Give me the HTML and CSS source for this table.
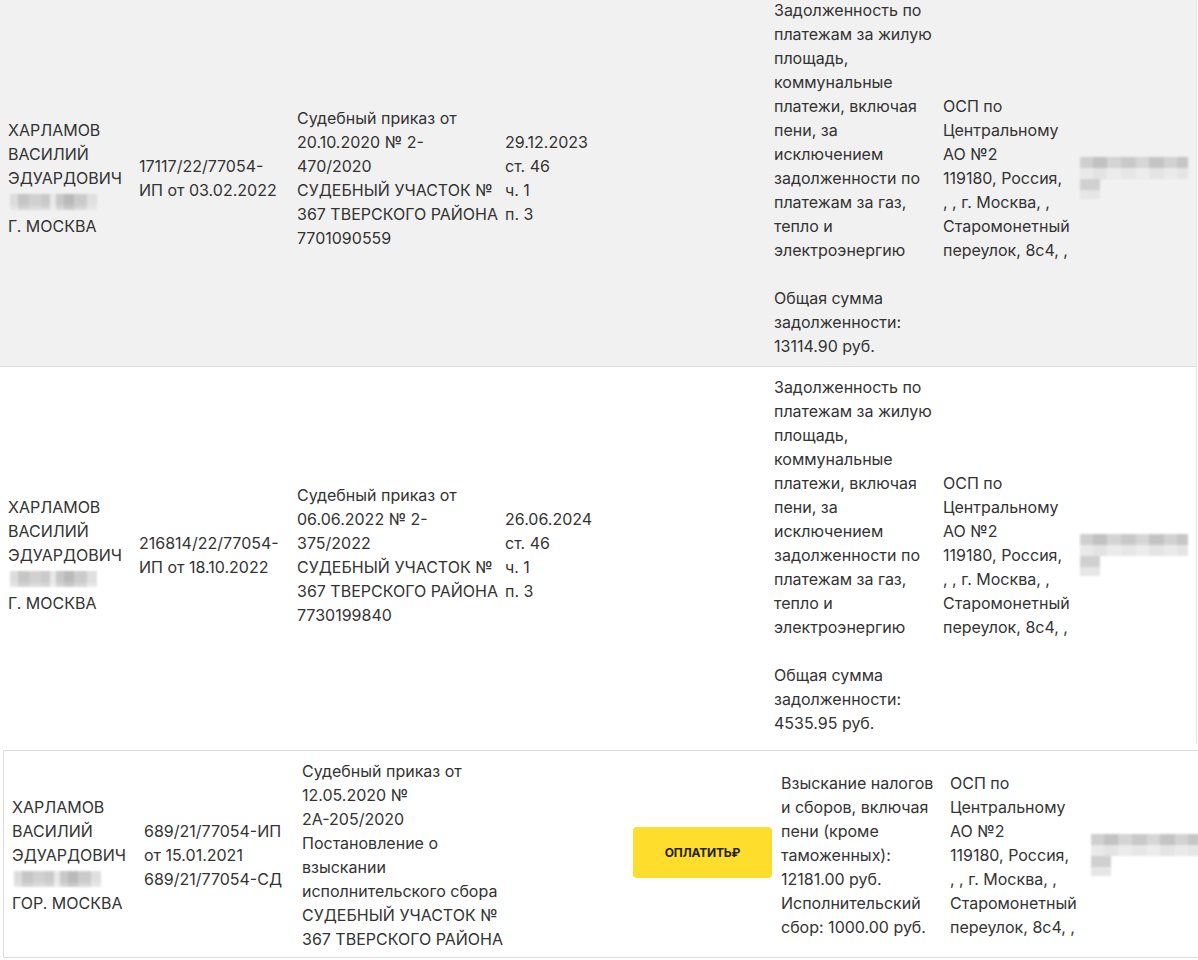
FILE: index.html
```html
<!DOCTYPE html>
<html lang="ru">
<head>
    <meta charset="UTF-8">
    <meta name="viewport" content="width=device-width, initial-scale=1.0">
    <title>Исполнительные производства</title>
    <link rel="stylesheet" href="styles.css">
</head>
<body>
    <div class="results">
        <table class="ip-table ip-table--main">
            <colgroup>
                <col class="c-name"><col class="c-num"><col class="c-doc"><col class="c-end">
                <col class="c-pay"><col class="c-subj"><col class="c-dept"><col class="c-agent">
            </colgroup>
            <tr class="row-alt">
                <td>ХАРЛАМОВ ВАСИЛИЙ ЭДУАРДОВИЧ<span class="blur blur-dob"></span>Г. МОСКВА</td>
                <td>17117/22/77054-<wbr>ИП от 03.02.2022</td>
                <td>Судебный приказ от 20.10.2020 № 2-<wbr>470/2020<br>СУДЕБНЫЙ УЧАСТОК № <span class="nowrap">367 ТВЕРСКОГО РАЙОНА</span> 7701090559</td>
                <td>29.12.2023<br>ст. 46<br>ч. 1<br>п. 3</td>
                <td></td>
                <td>Задолженность по платежам за жилую площадь, коммунальные платежи, включая пени, за исключением задолженности по платежам за газ, тепло и электроэнергию<br><br>Общая сумма задолженности: 13114.90 руб.</td>
                <td>ОСП по Центральному АО №2<br>119180, Россия, , , г. Москва, , Старомонетный переулок, 8с4, ,</td>
                <td><span class="blur blur-agent"><span class="blur-line"></span><span class="blur-tail"></span></span></td>
            </tr>
            <tr>
                <td>ХАРЛАМОВ ВАСИЛИЙ ЭДУАРДОВИЧ<span class="blur blur-dob"></span>Г. МОСКВА</td>
                <td>216814/22/77054-<wbr>ИП от 18.10.2022</td>
                <td>Судебный приказ от 06.06.2022 № 2-<wbr>375/2022<br>СУДЕБНЫЙ УЧАСТОК № <span class="nowrap">367 ТВЕРСКОГО РАЙОНА</span> 7730199840</td>
                <td>26.06.2024<br>ст. 46<br>ч. 1<br>п. 3</td>
                <td></td>
                <td>Задолженность по платежам за жилую площадь, коммунальные платежи, включая пени, за исключением задолженности по платежам за газ, тепло и электроэнергию<br><br>Общая сумма задолженности: 4535.95 руб.</td>
                <td>ОСП по Центральному АО №2<br>119180, Россия, , , г. Москва, , Старомонетный переулок, 8с4, ,</td>
                <td><span class="blur blur-agent"><span class="blur-line"></span><span class="blur-tail"></span></span></td>
            </tr>
        </table>

        <table class="ip-table ip-table--single">
            <colgroup>
                <col class="s-name"><col class="s-num"><col class="s-doc"><col class="s-end">
                <col class="s-pay"><col class="s-subj"><col class="s-dept"><col class="s-agent">
            </colgroup>
            <tr>
                <td>ХАРЛАМОВ ВАСИЛИЙ ЭДУАРДОВИЧ<span class="blur blur-dob"></span>ГОР. МОСКВА</td>
                <td>689/21/77054-ИП от 15.01.2021<br>689/21/77054-СД</td>
                <td>Судебный приказ от 12.05.2020 № <span class="nowrap">2А-205/2020</span><br>Постановление о взыскании исполнительского сбора<br>СУДЕБНЫЙ УЧАСТОК № 367 ТВЕРСКОГО РАЙОНА</td>
                <td></td>
                <td class="cell-pay"><button class="pay-btn" type="button">Оплатить₽</button></td>
                <td>Взыскание налогов и сборов, включая пени (кроме таможенных): 12181.00 руб.<br>Исполнительский сбор: 1000.00 руб.</td>
                <td class="cell-dept">ОСП по Центральному АО №2<br>119180, Россия, , , г. Москва, , Старомонетный <span class="nowrap">переулок, 8с4, ,</span></td>
                <td><span class="blur blur-agent"><span class="blur-line"></span><span class="blur-tail"></span></span></td>
            </tr>
        </table>
    </div>
</body>
</html>
```

FILE: styles.css
```css
html, body {
    overflow: hidden;
}
body {
    margin: 0;
    font-family: 'Inter', 'Roboto', sans-serif;
    font-size: 16px;
    line-height: 24px;
    color: #333;
    background: #fff;
}
.ip-table {
    border-collapse: separate;
    border-spacing: 0;
    table-layout: fixed;
}
.ip-table td {
    padding: 8px 2px 8px 8px;
    vertical-align: middle;
    text-align: left;
}
.ip-table--main {
    width: 1197px;
    margin-top: -10px;
    border-right: 1px solid #e6e6e6;
}
.ip-table--main .row-alt td {
    background: #f1f1f1;
    border-bottom: 1px solid #dcdcdc;
}
.c-name { width: 131px; }
.c-num { width: 158px; }
.c-doc { width: 208px; }
.c-end { width: 105px; }
.c-pay { width: 164px; }
.c-subj { width: 169px; }
.c-dept { width: 135px; }
.c-agent { width: 126px; }

.ip-table--single {
    width: 1198px;
    margin: 7px 0 0 3px;
    border: 1px solid #dcdcdc;
}
.ip-table--single td {
    padding-bottom: 6px;
}
.s-name { width: 132px; }
.s-num { width: 158px; }
.s-doc { width: 215px; }
.s-end { width: 116px; }
.s-pay { width: 148px; }
.s-subj { width: 169px; }
.s-dept { width: 139px; }
.s-agent { width: 119px; }

.nowrap { white-space: nowrap; }

.ip-table td.cell-pay { padding-right: 0; }
.ip-table td.cell-dept { padding-right: 8px; }
.pay-btn {
    display: block;
    width: 139px;
    height: 51px;
    margin-bottom: 6px;
    border: 0;
    border-radius: 4px;
    background: #ffdd2d;
    color: #222;
    font-family: 'Inter', 'Roboto', sans-serif;
    font-size: 12px;
    font-weight: 700;
    text-transform: uppercase;
    letter-spacing: -0.2px;
    cursor: pointer;
}

/* hidden personal data */
.blur {
    display: block;
    filter: blur(1.2px);
}
.blur-dob {
    width: 87px;
    height: 16px;
    margin: 4px 0 4px 2px;
    background:
        linear-gradient(180deg, rgba(255,255,255,0) 60%, rgba(255,255,255,0.35) 100%),
        linear-gradient(90deg, #dcdcdc 0 9%, #c6c6c6 9% 22%, #d0d0d0 22% 36%, #cacaca 36% 46%,
            #e8e8e8 46% 53%, #c8c8c8 53% 62%, #bababa 62% 74%, #cbcbcb 74% 88%, #e0e0e0 88% 100%);
}
.blur-agent {
    width: 108px;
    margin-left: 2px;
}
.blur-line {
    display: block;
    height: 22px;
    background:
        linear-gradient(180deg, rgba(255,255,255,0) 50%, rgba(255,255,255,0.55) 52%),
        linear-gradient(90deg, #cfcfcf 0 12%, #c2c2c2 12% 25%, #d4d4d4 25% 38%, #c9c9c9 38% 52%,
            #d6d6d6 52% 64%, #c4c4c4 64% 78%, #d2d2d2 78% 90%, #c6c6c6 90% 100%);
}
.blur-tail {
    display: block;
    width: 20px;
    height: 20px;
    background: linear-gradient(180deg, #d0d0d0 0 55%, #e6e6e6 55% 100%);
}
```
